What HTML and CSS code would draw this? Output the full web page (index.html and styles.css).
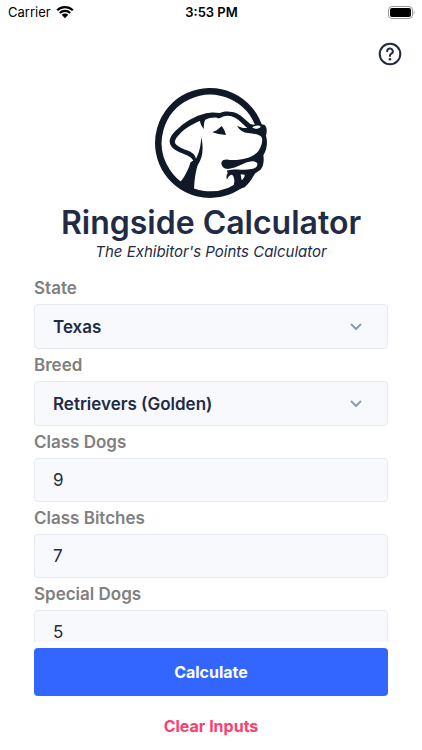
FILE: index.html
```html
<!DOCTYPE html>
<html lang="en">

<head>
    <meta charset="UTF-8">
    <meta name="viewport" content="width=device-width, initial-scale=1.0">
    <title>Ringside Calculator</title>
    <link rel="stylesheet" href="styles.css">
</head>

<body>
    <div class="status-bar">
        <div class="status-left">
            <span>Carrier</span>
            <svg class="wifi" viewBox="0 0 18 14" aria-hidden="true">
                <path d="M1.2 5.2a11.2 11.2 0 0 1 15.6 0M3.8 8a7.4 7.4 0 0 1 10.4 0" />
                <path class="wifi-dot" d="M9 13.2L5.7 9.8a4.7 4.7 0 0 1 6.6 0z" />
            </svg>
        </div>
        <div class="status-time">3:53 PM</div>
        <div class="status-right">
            <svg class="battery" viewBox="0 0 27 13" aria-hidden="true">
                <rect class="battery-case" x="0.5" y="0.5" width="24" height="12" rx="3.5" />
                <rect x="2" y="2" width="21" height="9" rx="2" />
                <path class="battery-tip" d="M25.6 4.5c1.2.6 1.2 3.4 0 4z" />
            </svg>
        </div>
    </div>

    <div class="toolbar">
        <button class="help-button" type="button" aria-label="Help">
            <svg viewBox="0 0 24 24" aria-hidden="true">
                <circle cx="12" cy="12" r="10.3" />
                <path d="M9.2 9.3a2.8 2.8 0 1 1 4.2 2.4c-.9.5-1.4.9-1.4 1.9v.4" />
                <circle class="help-dot" cx="12" cy="17.2" r="1.3" />
            </svg>
        </button>
    </div>

    <header class="header">
        <svg class="logo" viewBox="3 0 390 375" aria-hidden="true">
            <!-- ring, open between the nose and the chin -->
            <path class="ring" d="M344 146A155 155 0 1 0 300 303" />
            <!-- ear, top of the head and muzzle -->
            <path d="M145 242C139 231 130 228 117 222C97 215 76 205 74 186C73 173 84 158 102 143C127 119 164 101 195 98C206 97 216 98 224 99C235 92 262 93 275 100C292 109 301 120 316 132C328 137 349 130 359 135C367 142 366 156 363 167C368 184 367 209 355 226C358 243 355 266 341 273C334 277 330 280 326 287C319 299 311 311 299 322L248 338C262 330 268 318 268 300C267 289 263 284 259 284C252 287 248 291 246 299C243 292 244 286 248 280C248 277 246 274 245 272C260 268 273 268 287 269C307 269 324 269 334 261C341 252 337 244 321 244C297 246 278 264 249 267C237 267 229 258 229 249C230 241 238 238 249 239C288 243 325 233 341 212C351 197 354 179 350 172C344 162 325 161 309 159C292 157 284 150 276 137C286 142 296 145 307 144C290 130 276 113 259 109C247 105 235 108 230 112C224 115 219 116 216 113C205 112 190 114 181 119C177 124 177 132 176 147C170 139 166 132 165 123C143 131 119 146 104 162C92 175 86 185 92 192C97 199 113 206 126 211C139 216 149 222 153 236C162 220 167 200 169 172C176 205 174 232 158 256C152 276 147 301 147 340L103 310C123 285 132 263 136 248C138 244 142 243 145 242Z" />
            <!-- nose highlight -->
            <path class="cut" d="M322 142C329 136 342 135 347 140C342 147 328 149 322 142Z" />
            <!-- lip highlight -->
            <path class="cut" d="M287 283L299 284C299 291 295 296 290 301Z" />
            <!-- eye -->
            <path d="M202 157Q218 151 230 138Q239 148 243 165Q223 165 202 157Z" />
        </svg>
        <h1 class="title">Ringside Calculator</h1>
        <p class="subtitle">The Exhibitor's Points Calculator</p>
    </header>

    <form class="calculator">
        <div class="fields">
            <label class="label" for="state">State</label>
            <div class="select-box">
                <select class="control select" id="state" name="state">
                    <option>Texas</option>
                </select>
                <svg class="chevron" viewBox="0 0 12 8" aria-hidden="true">
                    <path d="M1.5 1.5L6 6l4.5-4.5" />
                </svg>
            </div>

            <label class="label" for="breed">Breed</label>
            <div class="select-box">
                <select class="control select" id="breed" name="breed">
                    <option>Retrievers (Golden)</option>
                </select>
                <svg class="chevron" viewBox="0 0 12 8" aria-hidden="true">
                    <path d="M1.5 1.5L6 6l4.5-4.5" />
                </svg>
            </div>

            <label class="label" for="class-dogs">Class Dogs</label>
            <input class="control" type="text" inputmode="numeric" id="class-dogs" name="class-dogs" value="9">

            <label class="label" for="class-bitches">Class Bitches</label>
            <input class="control" type="text" inputmode="numeric" id="class-bitches" name="class-bitches" value="7">

            <label class="label" for="special-dogs">Special Dogs</label>
            <input class="control" type="text" inputmode="numeric" id="special-dogs" name="special-dogs" value="5">
        </div>

        <div class="actions">
            <button class="button button-primary" type="submit">Calculate</button>
            <button class="button button-clear" type="reset">Clear Inputs</button>
        </div>
    </form>
</body>

</html>
```

FILE: styles.css
```css
* {
    box-sizing: border-box;
}

body {
    display: flex;
    flex-direction: column;
    height: 100vh;
    margin: 0;
    background: #fff;
    color: #222b45;
    font-family: Inter, "Liberation Sans", sans-serif;
}

/* Status bar */
.status-bar {
    display: grid;
    grid-template-columns: 1fr auto 1fr;
    align-items: center;
    height: 24px;
    padding: 0 7px 0 8px;
    color: #000;
    font-size: 13px;
}

.status-left {
    display: flex;
    align-items: center;
    gap: 5px;
}

.status-time {
    font-weight: 600;
}

.status-right {
    display: flex;
    justify-content: flex-end;
}

.wifi {
    width: 18px;
    height: 14px;
    fill: none;
    stroke: #000;
    stroke-width: 2.2;
}

.wifi-dot {
    fill: #000;
    stroke: none;
}

.battery {
    width: 27px;
    height: 13px;
}

.battery-case {
    fill: none;
    stroke: #999;
}

.battery-tip {
    fill: #999;
}

/* Help button */
.toolbar {
    display: flex;
    justify-content: flex-end;
    padding: 18px 20px 0;
}

.help-button {
    width: 24px;
    height: 24px;
    padding: 0;
    border: 0;
    background: none;
}

.help-button svg {
    display: block;
    fill: none;
    stroke: #222b45;
    stroke-width: 2;
    stroke-linecap: round;
}

.help-button .help-dot {
    fill: #222b45;
    stroke: none;
}

/* Logo and title */
.header {
    display: flex;
    flex-direction: column;
    align-items: center;
    padding-top: 14px;
}

.logo {
    width: 130px;
    height: 125px;
    fill: #111827;
}

.ring {
    fill: none;
    stroke: #111827;
    stroke-width: 20;
}

.cut {
    fill: #fff;
}

.title {
    margin: 0;
    font-size: 32px;
    font-weight: 600;
    line-height: 36px;
}

.subtitle {
    margin: 0;
    font-size: 15px;
    font-style: italic;
    line-height: 22px;
}

/* Form */
.calculator {
    display: flex;
    flex: 1;
    flex-direction: column;
    min-height: 0;
    margin: 0;
    padding: 9px 34px 0;
}

.fields {
    flex: 1;
    min-height: 0;
    overflow-y: auto;
    scrollbar-width: none;
}

.label {
    display: block;
    padding: 4px 0;
    color: #808080;
    font-size: 17px;
    font-weight: 600;
    line-height: 24px;
}

.control {
    display: block;
    width: 100%;
    height: 44px;
    padding: 0 18px;
    border: 1px solid #e4e9f2;
    border-radius: 4px;
    background: #f7f9fc;
    color: #222b45;
    font-family: inherit;
    font-size: 17px;
}

.select-box {
    position: relative;
}

.select {
    height: 45px;
    appearance: none;
    font-weight: 600;
}

.chevron {
    position: absolute;
    top: 19px;
    right: 26px;
    width: 12px;
    height: 8px;
    fill: none;
    stroke: #8f9bb3;
    stroke-width: 2;
    stroke-linecap: round;
    stroke-linejoin: round;
    pointer-events: none;
}

/* Buttons */
.actions {
    display: flex;
    flex-direction: column;
    gap: 6px;
    padding-top: 6px;
}

.button {
    height: 48px;
    padding: 0;
    border: 0;
    border-radius: 4px;
    font-family: inherit;
    font-size: 16px;
    font-weight: 700;
}

.button-primary {
    background: #3366ff;
    color: #fff;
}

.button-clear {
    background: none;
    color: #ff3d71;
}
```
